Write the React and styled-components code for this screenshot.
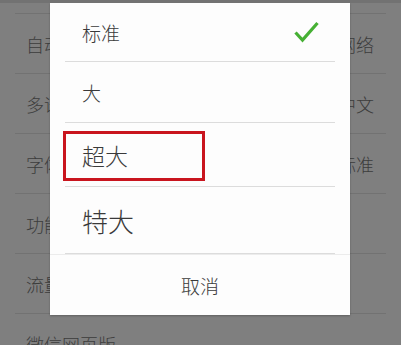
import React from "react";
import styled, { createGlobalStyle } from "styled-components";

const GlobalStyle = createGlobalStyle`
  html, body {
    margin: 0;
    padding: 0;
    width: 401px;
    height: 345px;
    overflow: hidden;
    background: #7f7f7f;
    font-family: "Noto Sans CJK SC", "Noto Sans", sans-serif;
  }
`;

const settings = [
  { label: "自动下载", value: "仅Wi-Fi网络" },
  { label: "多语言", value: "简体中文" },
  { label: "字体大小", value: "标准" },
  { label: "功能", value: "" },
  { label: "流量统计", value: "" },
  { label: "微信网页版", value: "" },
];

const sizes = [
  { text: "标准", size: 19, height: 59, checked: true },
  { text: "大", size: 19, height: 61 },
  { text: "超大", size: 23, height: 64, marked: true },
  { text: "特大", size: 26, height: 67 },
];

const Screen = styled.div`
  position: relative;
  width: 401px;
  height: 345px;
  overflow: hidden;
  background: #7f7f7f;
  border-top: 3px solid #727272;
  box-sizing: border-box;
`;

const List = styled.div`
  padding: 10px 15px 0;
`;

const Row = styled.div`
  height: 60px;
  border-top: 1px solid #727272;
  box-sizing: border-box;
  display: flex;
  align-items: center;
  justify-content: space-between;
  padding: 0 12px 0 11px;
  font-size: 18px;
  font-weight: 300;
  color: #3c3c3c;
`;

const Dialog = styled.div`
  position: absolute;
  top: 0;
  left: 50px;
  width: 300px;
  background: #fdfdfd;
  box-shadow: 0 1px 2px rgba(0, 0, 0, 0.25);
  display: flex;
  flex-direction: column;
`;

const Option = styled.div`
  position: relative;
  height: ${(p) => p.$h}px;
  margin: 0 15px;
  border-bottom: 1px solid #dcdcdc;
  box-sizing: border-box;
  display: flex;
  align-items: center;
  justify-content: space-between;
  padding: 0 16px 0 17px;
  font-size: ${(p) => p.$size}px;
  font-weight: 300;
  color: #3a3a3a;
`;

const Marker = styled.div`
  position: absolute;
  left: -2px;
  top: 8px;
  width: 142px;
  height: 50px;
  border: 3px solid #c9151e;
  box-sizing: border-box;
`;

const Cancel = styled.div`
  height: 60px;
  border-top: 1px solid #ececec;
  display: flex;
  align-items: center;
  justify-content: center;
  font-size: 19px;
  font-weight: 300;
  color: #3a3a3a;
`;

const Check = () => (
  <svg width="25" height="22" viewBox="0 0 25 22">
    <path
      d="M1.5 11.5 L8.5 19 L23.5 2"
      fill="none"
      stroke="#46b034"
      strokeWidth="3.2"
      strokeLinecap="butt"
      strokeLinejoin="miter"
    />
  </svg>
);

export default function App() {
  return (
    <Screen>
      <GlobalStyle />
      <List>
        {settings.map((s) => (
          <Row key={s.label}>
            <span>{s.label}</span>
            <span>{s.value}</span>
          </Row>
        ))}
      </List>
      <Dialog>
        {sizes.map((o) => (
          <Option key={o.text} $h={o.height} $size={o.size}>
            <span>{o.text}</span>
            {o.checked && <Check />}
            {o.marked && <Marker />}
          </Option>
        ))}
        <Cancel>取消</Cancel>
      </Dialog>
    </Screen>
  );
}
